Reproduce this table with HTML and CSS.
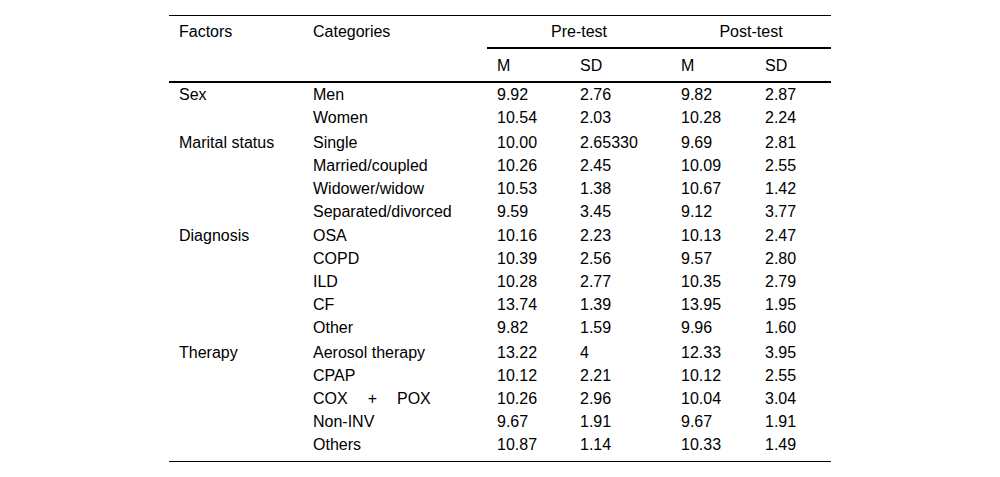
FILE: index.html
```html
<!DOCTYPE html>
<html>
<head>
<meta charset="utf-8">
<link rel="stylesheet" href="styles.css">
</head>
<body>
<table class="data">
  <colgroup>
    <col class="c1"><col class="c2"><col class="c3"><col class="c4"><col class="c5"><col class="c6">
  </colgroup>
  <thead>
    <tr class="h1">
      <th rowspan="2">Factors</th>
      <th rowspan="2">Categories</th>
      <th colspan="2" class="span">Pre-test</th>
      <th colspan="2" class="span">Post-test</th>
    </tr>
    <tr class="h2">
      <th>M</th><th>SD</th><th>M</th><th>SD</th>
    </tr>
  </thead>
  <tbody>
    <tr class="first"><td>Sex</td><td>Men</td><td>9.92</td><td>2.76</td><td>9.82</td><td>2.87</td></tr>
    <tr><td></td><td>Women</td><td>10.54</td><td>2.03</td><td>10.28</td><td>2.24</td></tr>
    <tr class="g"><td>Marital status</td><td>Single</td><td>10.00</td><td>2.65330</td><td>9.69</td><td>2.81</td></tr>
    <tr><td></td><td>Married/coupled</td><td>10.26</td><td>2.45</td><td>10.09</td><td>2.55</td></tr>
    <tr><td></td><td>Widower/widow</td><td>10.53</td><td>1.38</td><td>10.67</td><td>1.42</td></tr>
    <tr><td></td><td>Separated/divorced</td><td>9.59</td><td>3.45</td><td>9.12</td><td>3.77</td></tr>
    <tr class="g"><td>Diagnosis</td><td>OSA</td><td>10.16</td><td>2.23</td><td>10.13</td><td>2.47</td></tr>
    <tr><td></td><td>COPD</td><td>10.39</td><td>2.56</td><td>9.57</td><td>2.80</td></tr>
    <tr><td></td><td>ILD</td><td>10.28</td><td>2.77</td><td>10.35</td><td>2.79</td></tr>
    <tr><td></td><td>CF</td><td>13.74</td><td>1.39</td><td>13.95</td><td>1.95</td></tr>
    <tr><td></td><td>Other</td><td>9.82</td><td>1.59</td><td>9.96</td><td>1.60</td></tr>
    <tr class="g"><td>Therapy</td><td>Aerosol therapy</td><td>13.22</td><td>4</td><td>12.33</td><td>3.95</td></tr>
    <tr><td></td><td>CPAP</td><td>10.12</td><td>2.21</td><td>10.12</td><td>2.55</td></tr>
    <tr><td></td><td><span class="sp">COX</span><span class="sp">+</span>POX</td><td>10.26</td><td>2.96</td><td>10.04</td><td>3.04</td></tr>
    <tr><td></td><td>Non-INV</td><td>9.67</td><td>1.91</td><td>9.67</td><td>1.91</td></tr>
    <tr class="last"><td></td><td>Others</td><td>10.87</td><td>1.14</td><td>10.33</td><td>1.49</td></tr>
  </tbody>
</table>
</body>
</html>
```

FILE: styles.css
```css
html, body {
  margin: 0;
  padding: 0;
  background: #fff;
}
body {
  font-family: "Liberation Sans", Arial, sans-serif;
  font-size: 16px;
  color: #000;
}
.data {
  border-collapse: collapse;
  width: 662px;
  margin: 15px auto 0;
  table-layout: fixed;
  border-top: 1px solid #000;
  border-bottom: 1px solid #000;
}
.c1 { width: 134px; }
.c2 { width: 184px; }
.c3 { width: 83px; }
.c4 { width: 101px; }
.c5 { width: 84px; }
.c6 { width: 76px; }
th, td {
  text-align: left;
  font-weight: normal;
  padding: 3px 0 3px 10px;
  line-height: 17px;
  vertical-align: top;
  white-space: nowrap;
}
.h1 th {
  padding-top: 7px;
  padding-bottom: 7px;
}
.h1 th.span {
  text-align: center;
  padding-left: 0;
  border-bottom: 2px solid #000;
}
.h2 th {
  padding-top: 8px;
  padding-bottom: 7px;
}
thead {
  border-bottom: 2px solid #000;
}
tr.first td {
  padding-top: 3px;
}
tr.g td {
  padding-top: 4.5px;
}
tr.last td {
  padding-bottom: 8px;
}
.sp {
  margin-right: 20px;
}
```
